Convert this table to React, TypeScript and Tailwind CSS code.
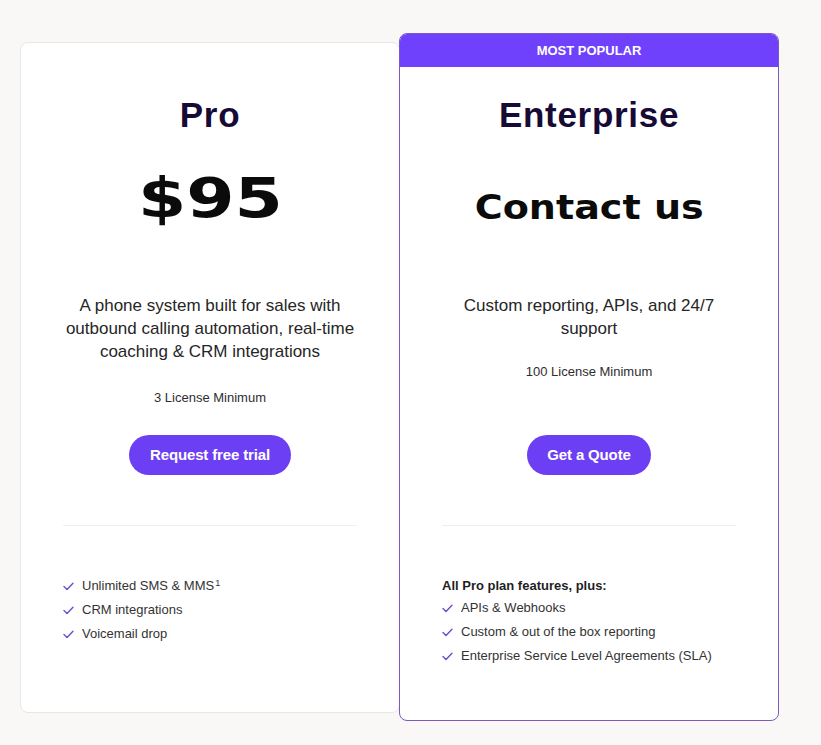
import React from "react";

type Plan = {
	name: string;
	price: string;
	priceClass: string;
	description: string[];
	descClass: string;
	minimum: string;
	minimumClass: string;
	button: string;
	buttonClass: string;
	lead?: string;
	features: React.ReactNode[];
};

const plans: Plan[] = [
	{
		name: "Pro",
		price: "$95",
		priceClass: "mt-[31px] text-[56px] leading-[64px] scale-x-[1.24]",
		description: [
			"A phone system built for sales with",
			"outbound calling automation, real-time",
			"coaching & CRM integrations",
		],
		descClass: "mt-[64px]",
		minimum: "3 License Minimum",
		minimumClass: "mt-[25px]",
		button: "Request free trial",
		buttonClass: "mt-[27px] w-[162px]",
		features: [
			<>
				Unlimited SMS &amp; MMS<sup className="text-[9px] ml-px">1</sup>
			</>,
			"CRM integrations",
			"Voicemail drop",
		],
	},
	{
		name: "Enterprise",
		price: "Contact us",
		priceClass: "mt-[40px] text-[34px] leading-[64px] scale-x-[1.12]",
		description: ["Custom reporting, APIs, and 24/7", "support"],
		descClass: "mt-[55px]",
		minimum: "100 License Minimum",
		minimumClass: "mt-[22px]",
		button: "Get a Quote",
		buttonClass: "mt-[53px] w-[124px]",
		lead: "All Pro plan features, plus:",
		features: [
			"APIs & Webhooks",
			"Custom & out of the box reporting",
			"Enterprise Service Level Agreements (SLA)",
		],
	},
];

function CheckIcon() {
	return (
		<svg width="11" height="9" viewBox="0 0 11 9" fill="none" className="shrink-0">
			<path d="M1 4.6 L4 7.6 L10 1.2" stroke="#6b4fc8" strokeWidth="1.4" strokeLinecap="round" strokeLinejoin="round" />
		</svg>
	);
}

function PlanBody({ plan }: { plan: Plan }) {
	return (
		<div className="flex flex-col items-center px-[42px] text-center">
			<h2 className="text-[35px] leading-[40px] font-bold tracking-[0.02em] text-[#170b36]">{plan.name}</h2>
			<div className={`font-['DejaVu_Sans',sans-serif] font-bold text-[#0b0b0b] ${plan.priceClass}`}>{plan.price}</div>

			<p className={`text-[17px] leading-[23px] text-[#262626] ${plan.descClass}`}>
				{plan.description.map((line) => (
					<span key={line} className="block">
						{line}
					</span>
				))}
			</p>
			<p className={`text-[13px] leading-[20px] text-[#2e2e2e] ${plan.minimumClass}`}>{plan.minimum}</p>

			<button
				className={`h-10 rounded-full bg-[#6c3ff4] text-[15px] font-bold text-white tracking-[-0.01em] ${plan.buttonClass}`}
			>
				{plan.button}
			</button>

			<div className="mt-[50px] h-px w-full bg-[#f1efed]" />

			<div className="mt-[50px] w-full text-left text-[13px] leading-[20px] text-[#333]">
				{plan.lead && <p className="mb-[2px] font-bold text-[#1f1f1f]">{plan.lead}</p>}
				<ul className="flex flex-col gap-1">
					{plan.features.map((f, i) => (
						<li key={i} className="flex items-center gap-2">
							<CheckIcon />
							<span>{f}</span>
						</li>
					))}
				</ul>
			</div>
		</div>
	);
}

export default function App() {
	return (
		<div className="min-h-[745px] bg-[#f9f8f6] font-['Liberation_Sans',Arial,sans-serif]">
			<div className="flex items-start pl-5 pt-[33px]">
				{/* Pro card */}
				<div className="mt-[9px] h-[671px] w-[380px] rounded-lg border border-[#e9e7e4] bg-white pt-[52px]">
					<PlanBody plan={plans[0]} />
				</div>

				{/* Enterprise card */}
				<div className="-ml-px h-[688px] w-[380px] overflow-hidden rounded-lg border border-[#7b58c6] bg-white">
					<div className="flex h-[33px] items-center justify-center bg-[#6f41fc] text-[13px] font-bold uppercase text-white">
						Most Popular
					</div>
					<div className="pt-[28px]">
						<PlanBody plan={plans[1]} />
					</div>
				</div>
			</div>
		</div>
	);
}
